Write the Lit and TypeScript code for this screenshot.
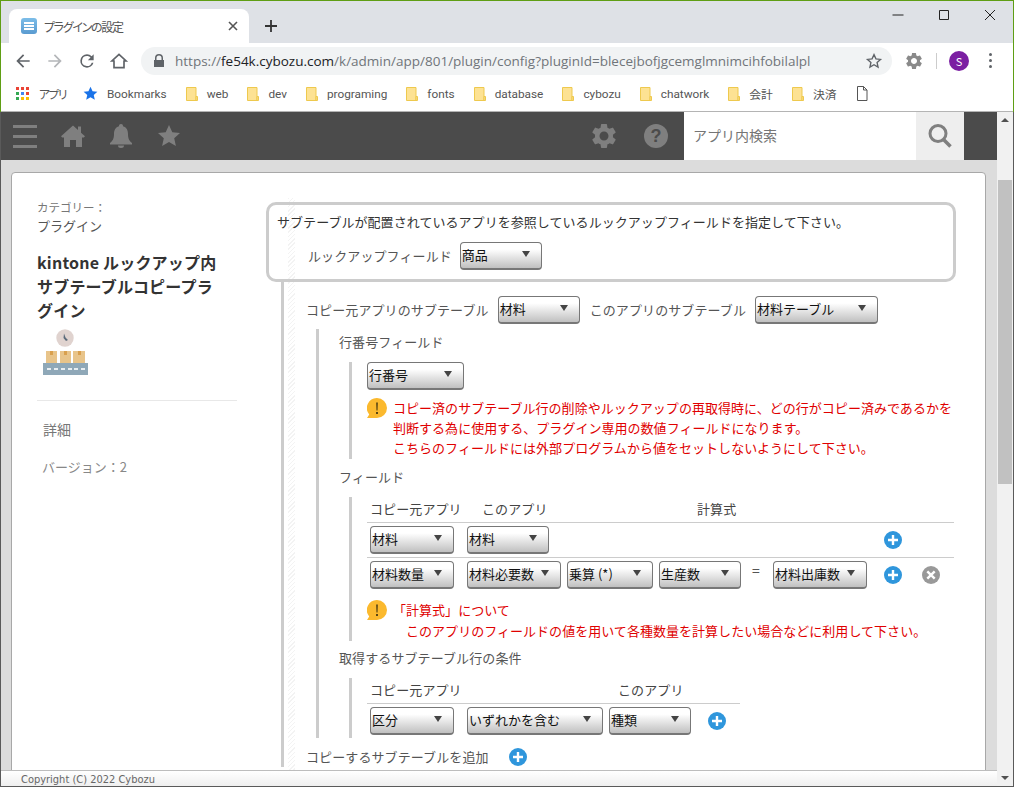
import { LitElement, html, css, svg } from 'lit';
import { customElement } from 'lit/decorators.js';

const icon = (size: number, path: unknown, cls = '') =>
  html`<svg class=${cls} width=${size} height=${size} viewBox="0 0 24 24">${path}</svg>`;

const GEAR = svg`<path fill="currentColor" d="M19.14 12.94c.04-.3.06-.61.06-.94 0-.32-.02-.64-.07-.94l2.03-1.58a.49.49 0 0 0 .12-.61l-1.92-3.32a.488.488 0 0 0-.59-.22l-2.39.96c-.5-.38-1.03-.7-1.62-.94l-.36-2.54a.484.484 0 0 0-.48-.41h-3.84c-.24 0-.43.17-.47.41l-.36 2.54c-.59.24-1.13.57-1.62.94l-2.39-.96c-.22-.08-.47 0-.59.22L2.74 8.87c-.12.21-.08.47.12.61l2.03 1.58c-.05.3-.09.63-.09.94s.02.64.07.94l-2.03 1.58a.49.49 0 0 0-.12.61l1.92 3.32c.12.22.37.29.59.22l2.39-.96c.5.38 1.03.7 1.62.94l.36 2.54c.05.24.24.41.48.41h3.84c.24 0 .44-.17.47-.41l.36-2.54c.59-.24 1.13-.56 1.62-.94l2.39.96c.22.08.47 0 .59-.22l1.92-3.32c.12-.22.07-.47-.12-.61l-2.01-1.58zM12 15.6c-1.98 0-3.6-1.62-3.6-3.6s1.62-3.6 3.6-3.6 3.6 1.62 3.6 3.6-1.62 3.6-3.6 3.6z"/>`;
const STAR = svg`<path fill="currentColor" d="M12 1l3.3 7.3 7.7.8-5.8 5.2 1.7 7.7L12 18l-6.900 4 1.700-7.700L1 9.100l7.700-.8z"/>`;

const folder = html`<svg class="folder" width="12" height="14" viewBox="0 0 12 14">
  <path d="M.5.5h9.500v13h-9.500z" fill="#fde293" stroke="#eec94e"/>
  <path d="M10 9.500h1.500v4h-1.500z" fill="#fde293" stroke="#eec94e"/>
</svg>`;

const caution = html`<svg class="caution" width="20" height="20" viewBox="0 0 20 20">
  <path d="M10 0a10 10 0 0 1 0 20H0l2.200-3.600A10 10 0 0 1 10 0z" fill="#fbb92e"/>
  <path d="M9.200 4.500h1.600l-.3 8h-1zM9.100 14h1.800v2H9.100z" fill="#4a3a10"/>
</svg>`;

const plus = html`<svg class="round" width="18" height="18" viewBox="0 0 18 18">
  <circle cx="9" cy="9" r="9" fill="#2f96dc"/>
  <path d="M9 4v10M4 9h10" stroke="#fff" stroke-width="2.400"/>
</svg>`;

const remove = html`<svg class="round" width="18" height="18" viewBox="0 0 18 18">
  <circle cx="9" cy="9" r="9" fill="#999"/>
  <path d="M5.300 5.300l7.400 7.400M12.700 5.300l-7.400 7.400" stroke="#fff" stroke-width="2.400"/>
</svg>`;

const select = (text: string, width: number) =>
  html`<div class="select" style="width:${width}px"><span>${text}</span><i></i></div>`;

const BOOKMARKS = ['web', 'dev', 'programing', 'fonts', 'database', 'cybozu', 'chatwork', '会計', '決済'];
const APP_DOTS = ['#ea4335', '#ea4335', '#ea4335', '#34a853', '#4285f4', '#ea4335', '#34a853', '#fbbc04', '#fbbc04'];

@customElement('app-root')
export class AppRoot extends LitElement {
  static styles = css`
    :host {
      display: flex;
      flex-direction: column;
      width: 1014px;
      height: 787px;
      overflow: hidden;
      font-family: 'Noto Sans CJK JP', 'Liberation Sans', sans-serif;
      font-size: 13px;
      color: #444;
      background: #dcdcdc;
    }
    svg { display: block; flex: none; }

    /* browser chrome */
    .browser {
      flex: none;
      height: 112px;
      border: 1px solid #5f9e14;
      border-bottom: 0;
      box-sizing: border-box;
      background: #fff;
    }
    .tabs {
      display: flex;
      align-items: flex-end;
      height: 42px;
      background: #dee1e6;
      position: relative;
    }
    .tab {
      display: flex;
      align-items: center;
      width: 240px;
      height: 34px;
      margin-left: 8px;
      box-sizing: border-box;
      padding: 0 11px 0 12px;
      background: #fff;
      border-radius: 8px 8px 0 0;
      font-size: 12px;
      color: #555;
    }
    .favicon {
      width: 16px;
      height: 16px;
      border-radius: 3px;
      background: linear-gradient(#7cbde8, #5a9bd0);
      margin-right: 7px;
      display: flex;
      flex-direction: column;
      justify-content: center;
      gap: 1px;
      align-items: center;
    }
    .favicon b { display: block; width: 10px; height: 2px; background: #fff; }
    .tab-title { flex: 1; font-feature-settings: 'palt'; letter-spacing: -1.3px; }
    .tab-close { color: #555; }
    .new-tab { color: #333; margin: 0 0 10px 15px; }
    .window {
      display: flex;
      margin-left: auto;
      align-self: flex-start;
      color: #222;
    }
    .window svg { margin: 6px 15px 0 15px; }
    .toolbar {
      display: flex;
      align-items: center;
      height: 35px;
      color: #5f6368;
    }
    .nav { width: 32px; display: flex; justify-content: center; }
    .nav.off { color: #b4b6b9; }
    .nav.first { margin-left: 6px; }
    .omnibox {
      display: flex;
      align-items: center;
      width: 751px;
      height: 28px;
      margin-left: 6px;
      box-sizing: border-box;
      padding: 0 9px 0 12px;
      border-radius: 14px;
      background: #f1f3f4;
    }
    .url {
      flex: 1;
      margin-left: 10px;
      font-family: 'Open Sans', sans-serif;
      font-size: 13.5px;
      color: #70757a;
      white-space: nowrap;
    }
    .url b { font-weight: 400; color: #202124; }
    .ext { margin-left: 12px; color: #8a8a8a; }
    .divider { width: 1px; height: 16px; background: #ccc; margin-left: 12px; }
    .avatar {
      width: 20px;
      height: 20px;
      margin-left: 12px;
      border-radius: 50%;
      background: #7b1fa2;
      color: #fff;
      font-size: 11px;
      text-align: center;
      line-height: 20px;
    }
    .dots { display: flex; flex-direction: column; gap: 3px; margin-left: 20px; }
    .dots b { width: 3px; height: 3px; border-radius: 50%; background: #5f6368; }
    .bookmarks {
      display: flex;
      align-items: center;
      height: 34px;
      box-sizing: border-box;
      padding: 0 0 2px 15px;
      border-bottom: 1px solid #b4b4b4;
      font: 11.8px Roboto, 'Noto Sans CJK JP', sans-serif;
      color: #555;
    }
    .grid-icon {
      display: grid;
      grid-template-columns: repeat(3, 3px);
      gap: 2px;
      margin-right: 10px;
    }
    .grid-icon b { width: 3px; height: 3px; }
    .bm { display: flex; align-items: center; gap: 9px; margin-right: 19px; }
    .bm.star { color: #1a73e8; }
    .bm span { color: #555; }
    .bm.apps { gap: 0; margin-right: 17px; font-feature-settings: 'palt'; letter-spacing: -1.5px; }

    /* page area */
    .viewport {
      flex: 1;
      display: flex;
      min-height: 0;
      border: 1px solid #5a5a5a;
      border-top: 0;
    }
    .page { flex: 1; display: flex; flex-direction: column; min-width: 0; }
    .scrollbar {
      width: 16px;
      flex: none;
      background: #f1f1f1;
      display: flex;
      flex-direction: column;
      align-items: center;
    }
    .scrollbar i {
      margin-top: 6px;
      border: 4px solid transparent;
      border-top: 0;
      border-bottom: 4px solid #505050;
    }
    .scrollbar i.down {
      margin: auto 0 6px;
      border-top: 4px solid #505050;
      border-bottom: 0;
    }
    .thumb { width: 14px; height: 304px; background: #c1c1c1; margin-top: 58px; }
    .header {
      flex: none;
      display: flex;
      align-items: center;
      height: 48px;
      padding-left: 12px;
      gap: 24px;
      background: #4b4b4b;
      color: #7f7f7f;
    }
    .burger { width: 24px; display: flex; flex-direction: column; gap: 7px; }
    .burger b { display: block; height: 3px; background: #7f7f7f; }
    .header-right { display: flex; align-items: center; margin-left: auto; padding-right: 33px; }
    .help {
      width: 24px;
      height: 24px;
      margin-left: 25px;
      border-radius: 50%;
      background: #7f7f7f;
      color: #4b4b4b;
      font: 700 18px/24px 'Liberation Sans', sans-serif;
      text-align: center;
    }
    .search {
      display: flex;
      align-items: center;
      width: 232px;
      height: 48px;
      margin-left: 16px;
      box-sizing: border-box;
      padding: 0 0 3px 9px;
      background: #fff;
      font-size: 14px;
      color: #757575;
    }
    .search-btn {
      width: 48px;
      height: 48px;
      background: #eee;
      color: #7f7f7f;
      display: flex;
      align-items: center;
      justify-content: center;
    }
    .content { flex: 1; min-height: 0; padding: 12px 0 0 10px; overflow: hidden; }
    .card {
      display: flex;
      width: 975px;
      min-height: 700px;
      box-sizing: border-box;
      padding: 29px 0 0 25px;
      background: #fff;
      border: 1px solid #a8a8a8;
      border-radius: 4px 4px 0 0;
      position: relative;
    }
    .footer {
      flex: none;
      height: 16px;
      box-sizing: border-box;
      padding: 1px 0 0 20px;
      overflow: hidden;
      border-top: 1px solid #bdbdbd;
      background: linear-gradient(#fff, #efefef);
      font: 9.900px/15px 'DejaVu Sans', sans-serif;
      color: #666;
    }

    /* sidebar */
    .side { width: 200px; flex: none; margin: -4px 29px 0 0; }
    .cat { font-size: 11.5px; line-height: 18px; color: #777; }
    .cat-name { font-size: 13px; line-height: 20px; color: #555; margin-bottom: 14px; }
    .title { width: 185px; font-size: 16px; font-weight: 700; line-height: 24px; letter-spacing: 0.2px; color: #333; }
    .app-icon { margin: 7px 0 0 6px; }
    .side hr { border: 0; border-top: 1px solid #e8e8e8; margin: 25px 0 18px; }
    .detail { font-size: 14px; line-height: 20px; color: #777; padding-left: 6px; }
    .version { font-size: 13px; line-height: 20px; color: #888; padding-left: 5px; margin-top: 18px; }

    /* settings */
    .main { width: 690px; flex: none; letter-spacing: 0.1px; }
    .hatch {
      position: absolute;
      left: 276px;
      top: 25px;
      bottom: 0;
      width: 7px;
      pointer-events: none;
      background: repeating-linear-gradient(135deg, #f3f3f3 0 1px, #fff 1px 3px);
    }
    .lookup {
      box-sizing: border-box;
      height: 80px;
      padding: 7px 8px 0;
      border: 3px solid #ccc;
      border-radius: 10px;
      line-height: 20px;
      letter-spacing: 0.05px;
      color: #333;
      position: relative;
      background: transparent;
    }
    .row { display: flex; align-items: center; }
    .lookup .row { margin: 10px 0 0 31px; color: #555; letter-spacing: 0.1px; }
    .lookup .row span.label { margin-right: 8px; }
    .tree {
      margin-left: 15px;
      padding: 14px 0 0 22px;
      border-left: 3px solid #ccc;
      line-height: 20px;
      color: #555;
      position: relative;
    }
    .tree .top > .label { margin-right: 9px; }
    .tree .top > .select + .label { margin-left: 10px; }
    .section {
      margin: 5px 0 0 10px;
      padding: 3px 0 0 20px;
      border-left: 3px solid #ccc;
    }
    .sub {
      margin: 10px 0 8px 10px;
      padding-left: 15px;
      border-left: 3px solid #ccc;
    }
    .sub.last { margin-bottom: 0; }
    .sub.rowfield { padding-bottom: 1px; }
    .sub.formula-sub { margin-bottom: 7px; }
    .note { display: flex; gap: 6px; margin-top: 8px; color: #e00000; line-height: 20px; letter-spacing: 0.03px; }
    .note.formula { line-height: 21px; }
    .note.formula div { margin-top: -1px; }
    .head {
      display: flex;
      padding: 2px 0 3px 3px;
      border-bottom: 1px solid #ccc;
      color: #444;
    }
    .fields { width: 587px; }
    .conds { width: 373px; }
    .line {
      display: grid;
      align-items: center;
      padding: 3px 0 3px 3px;
    }
    .fields .line { grid-template-columns: 97px 100px 92px 82px 32px 110px 38px 20px; }
    .fields .line + .line { border-top: 1px solid #ccc; }
    .fields .plus-col { grid-column: 7; }
    .conds .line { grid-template-columns: 97px 142px 98px 20px; }
    .line .round { margin-left: 1px; }
    .equals { justify-self: start; margin: -10px 0 0 11px; font-size: 14px; }
    .add { margin-top: 9px; }
    .add .round { margin-left: 20px; }
    .select {
      flex: none;
      display: flex;
      justify-content: space-between;
      box-sizing: border-box;
      height: 28px;
      padding: 2px 11px 0 1px;
      border: 1px solid #777;
      border-bottom-width: 2px;
      border-radius: 4px;
      background: linear-gradient(#fff, #fff 25%, #c0c0c0);
      color: #111;
      font-size: 13px;
      line-height: 20px;
      letter-spacing: 0;
      white-space: nowrap;
    }
    .select i {
      flex: none;
      width: 0;
      height: 0;
      margin-top: 6px;
      border: 4px solid transparent;
      border-top: 6px solid #444;
      border-bottom: 0;
    }
  `;

  render() {
    return html`
      <div class="browser">
        <div class="tabs">
          <div class="tab">
            <div class="favicon"><b></b><b></b><b></b></div>
            <span class="tab-title">プラグインの設定</span>
            <svg class="tab-close" width="10" height="10" viewBox="0 0 10 10"><path d="M1 1l8 8M9 1l-8 8" stroke="currentColor" stroke-width="1.600"/></svg>
          </div>
          <svg class="new-tab" width="14" height="14" viewBox="0 0 14 14"><path d="M7 1v12M1 7h12" stroke="currentColor" stroke-width="1.800"/></svg>
          <div class="window">
            <svg width="16" height="16" viewBox="0 0 16 16"><path d="M2.500 8h11" stroke="currentColor"/></svg>
            <svg width="16" height="16" viewBox="0 0 16 16"><path d="M3.500 3.500h9v9h-9z" fill="none" stroke="currentColor"/></svg>
            <svg width="16" height="16" viewBox="0 0 16 16"><path d="M3 3l10 10M13 3L3 13" stroke="currentColor"/></svg>
          </div>
        </div>
        <div class="toolbar">
          <div class="nav first">${icon(20, svg`<path fill="currentColor" d="M20 11H7.830l5.590-5.590L12 4l-8 8 8 8 1.410-1.410L7.830 13H20z"/>`)}</div>
          <div class="nav off">${icon(20, svg`<path fill="currentColor" d="M12 4l-1.410 1.410L16.170 11H4v2h12.170l-5.580 5.590L12 20l8-8z"/>`)}</div>
          <div class="nav">${icon(20, svg`<path fill="currentColor" d="M17.650 6.350A7.960 7.960 0 0 0 12 4a8 8 0 1 0 7.730 10h-2.080A6 6 0 1 1 12 6c1.660 0 3.140.690 4.220 1.780L13 11h7V4z"/>`)}</div>
          <div class="nav">${icon(20, svg`<path fill="none" stroke="currentColor" stroke-width="2" d="M6 20v-8H3.500L12 4l8.500 8H18v8z"/>`)}</div>
          <div class="omnibox">
            <svg width="12" height="14" viewBox="0 0 12 14"><path fill="#5f6368" d="M2 6V4a4 4 0 0 1 8 0v2h1v7H1V6zm1.500 0h5V4a2.500 2.500 0 0 0-5 0z"/></svg>
            <span class="url">https://<b>fe54k.cybozu.com</b>/k/admin/app/801/plugin/config?pluginId=blecejbofjgcemglmnimcihfobilalpl</span>
            ${icon(18, svg`<path fill="none" stroke="#5f6368" stroke-width="1.800" d="M12 3.500l2.600 5.700 6.100.7-4.600 4.100 1.300 6.100L12 17l-5.400 3.100 1.300-6.100-4.600-4.100 6.100-.7z"/>`)}
          </div>
          <div class="ext">${icon(20, GEAR)}</div>
          <div class="divider"></div>
          <div class="avatar">S</div>
          <div class="dots"><b></b><b></b><b></b></div>
        </div>
        <div class="bookmarks">
          <div class="bm apps">
            <div class="grid-icon">${APP_DOTS.map((c) => html`<b style="background:${c}"></b>`)}</div>
            <span>アプリ</span>
          </div>
          <div class="bm star">${icon(15, STAR)}<span>Bookmarks</span></div>
          ${BOOKMARKS.map((b) => html`<div class="bm">${folder}<span>${b}</span></div>`)}
          <svg class="doc" width="12" height="15" viewBox="0 0 12 15"><path d="M1.500.5h6l3.500 3.500v10.500h-9.500zM7.500.5V4H11" fill="#fff" stroke="#555"/></svg>
        </div>
      </div>

      <div class="viewport">
        <div class="page">
          <div class="header">
            <div class="burger"><b></b><b></b><b></b></div>
            ${icon(24, svg`<path fill="currentColor" d="M12 1.500l5 4.500V2.500h3V8.700l4 3.600-1.200 1.200H21V23h-6v-7H9v7H3v-9.500H1.200L0 12.300z"/>`)}
            ${icon(24, svg`<path fill="currentColor" d="M12 0a2 2 0 0 1 2 2.200c3.500 1 5 4 5 7.800 0 5 1.500 7 4 9v1.500H1V19c2.500-2 4-4 4-9 0-3.800 1.500-6.800 5-7.800A2 2 0 0 1 12 0zM9 21.500h6a3 2.500 0 0 1-6 0z"/>`)}
            ${icon(24, STAR)}
            <div class="header-right">
              ${icon(30, GEAR)}
              <div class="help">?</div>
              <div class="search">アプリ内検索</div>
              <div class="search-btn">
                <svg width="26" height="26" viewBox="0 0 26 26"><circle cx="11" cy="10.500" r="8" fill="none" stroke="currentColor" stroke-width="3"/><path d="M16.500 16.500l7 7" stroke="currentColor" stroke-width="3.500"/></svg>
              </div>
            </div>
          </div>

          <div class="content">
            <div class="card">
              <div class="hatch"></div>
              <div class="side">
                <div class="cat">カテゴリー：</div>
                <div class="cat-name">プラグイン</div>
                <div class="title">kintone ルックアップ内サブテーブルコピープラグイン</div>
                <svg class="app-icon" width="46" height="46" viewBox="0 0 46 46">
                  <circle cx="22" cy="9" r="8.700" fill="#e0d3cf"/>
                  <path d="M21 4.500l1.500 4 2.500 2.500-2 1-2.500-3z" fill="#5b6b7a"/>
                  <path d="M3 22h11v12H3zM17 22h11v12H17zM30 22h12v12H30z" fill="#e8c48a"/>
                  <path d="M7 22h3v4H7zM21 22h3v4h-3zM35 22h3v4h-3z" fill="#d9a04e"/>
                  <path d="M0 34h45v12H0z" fill="#8fa8b8"/>
                  <path d="M4 39h4v2H4zM11 39h4v2h-4zM18 39h4v2h-4zM25 39h4v2h-4zM31 39h4v2h-4zM38 39h4v2h-4z" fill="#e8eef2"/>
                </svg>
                <hr />
                <div class="detail">詳細</div>
                <div class="version">バージョン：2</div>
              </div>

              <div class="main">
                <div class="lookup">
                  サブテーブルが配置されているアプリを参照しているルックアップフィールドを指定して下さい。
                  <div class="row"><span class="label">ルックアップフィールド</span>${select('商品', 82)}</div>
                </div>
                <div class="tree">
                  <div class="row top">
                    <span class="label">コピー元アプリのサブテーブル</span>${select('材料', 82)}
                    <span class="label">このアプリのサブテーブル</span>${select('材料テーブル', 123)}
                  </div>
                  <div class="section">
                    <div>行番号フィールド</div>
                    <div class="sub rowfield">
                      ${select('行番号', 97)}
                      <div class="note">
                        ${caution}
                        <div>コピー済のサブテーブル行の削除やルックアップの再取得時に、どの行がコピー済みであるかを<br />判断する為に使用する、プラグイン専用の数値フィールドになります。<br />こちらのフィールドには外部プログラムから値をセットしないようにして下さい。</div>
                      </div>
                    </div>
                    <div>フィールド</div>
                    <div class="sub formula-sub">
                      <div class="fields">
                        <div class="head">
                          <span style="width:112px">コピー元アプリ</span>
                          <span style="width:215px">このアプリ</span>
                          <span>計算式</span>
                        </div>
                        <div class="line">
                          ${select('材料', 84)}${select('材料', 82)}
                          <div class="plus-col">${plus}</div>
                        </div>
                        <div class="line">
                          ${select('材料数量', 84)}${select('材料必要数', 94)}${select('乗算 (*)', 86)}${select('生産数', 82)}
                          <span class="equals">=</span>
                          ${select('材料出庫数', 94)}${plus}${remove}
                        </div>
                      </div>
                      <div class="note formula">
                        ${caution}
                        <div>「計算式」について<br />　このアプリのフィールドの値を用いて各種数量を計算したい場合などに利用して下さい。</div>
                      </div>
                    </div>
                    <div>取得するサブテーブル行の条件</div>
                    <div class="sub last">
                      <div class="conds">
                        <div class="head">
                          <span style="width:248px">コピー元アプリ</span>
                          <span>このアプリ</span>
                        </div>
                        <div class="line">
                          ${select('区分', 84)}${select('いずれかを含む', 136)}${select('種類', 82)}${plus}
                        </div>
                      </div>
                    </div>
                  </div>
                  <div class="row add"><span>コピーするサブテーブルを追加</span>${plus}</div>
                </div>
              </div>
            </div>
          </div>
          <div class="footer">Copyright (C) 2022 Cybozu</div>
        </div>
        <div class="scrollbar"><i></i><div class="thumb"></div><i class="down"></i></div>
      </div>
    `;
  }
}
